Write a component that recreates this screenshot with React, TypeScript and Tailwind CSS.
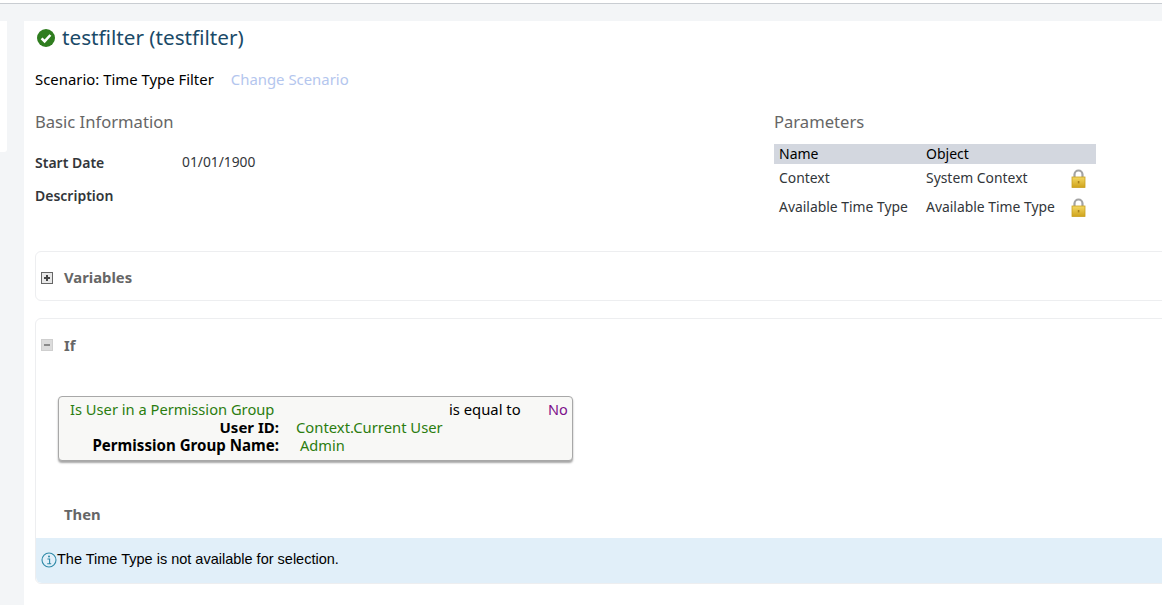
import React from 'react';

const font = 'font-["Noto_Sans",sans-serif]';

const CheckIcon = () => (
  <svg width="20" height="20" viewBox="0 0 20 20" className="shrink-0">
    <circle cx="10" cy="10" r="9" fill="#2f7d1f" />
    <path d="M5.6 10.4 8.6 13.4 14.4 7" fill="none" stroke="#fff" strokeWidth="2.6" />
  </svg>
);

const LockIcon = () => (
  <svg width="15" height="19" viewBox="0 0 15 19">
    <defs>
      <linearGradient id="lockBody" x1="0" y1="0" x2="0" y2="1">
        <stop offset="0" stopColor="#f4d862" />
        <stop offset="1" stopColor="#cfa31c" />
      </linearGradient>
    </defs>
    <path d="M3.5 8V5.5a4 4 0 0 1 8 0V8" fill="none" stroke="#a3a3a3" strokeWidth="2.2" />
    <rect x="1" y="8" width="13" height="10.5" fill="url(#lockBody)" stroke="#c9a020" strokeWidth="0.8" />
    <rect x="6.8" y="12" width="1.6" height="2.4" fill="#a8801a" />
  </svg>
);

const ToggleBox = ({ open }: { open?: boolean }) => (
  <span
    className={`flex h-[12px] w-[12px] items-center justify-center border ${
      open ? 'border-[#cfcfcf] bg-[#dcdcdc]' : 'border-[#666666] bg-[#e8e8e8]'
    }`}
  >
    <span className={`relative block h-[2px] w-[6px] ${open ? 'bg-[#8a8a8a]' : 'bg-[#444444]'}`}>
      {!open && <span className="absolute left-[2px] top-[-2px] block h-[6px] w-[2px] bg-[#444444]" />}
    </span>
  </span>
);

const InfoIcon = () => (
  <svg width="16" height="16" viewBox="0 0 16 16" className="shrink-0">
    <circle cx="8" cy="8" r="7" fill="none" stroke="#2f8aa8" strokeWidth="1.1" />
    <circle cx="8" cy="4.6" r="1" fill="#2f8aa8" />
    <path d="M6.4 7h2.2v4.6M6.2 11.8h4" fill="none" stroke="#2f8aa8" strokeWidth="1.1" />
  </svg>
);

const params = ['Context', 'Available Time Type'];
const paramObjects = ['System Context', 'Available Time Type'];

export default function App() {
  return (
    <div className={`h-[605px] w-[1162px] overflow-hidden bg-[#f3f5f7] ${font}`}>
      <div className="h-[4px] border-b border-[#c9cdd2] bg-white" />
      <div className="flex items-start gap-[17px] pt-[17px]">
        <div className="h-[131px] w-[7px] rounded-br-[3px] bg-white" />

        {/* Main panel */}
        <div className="h-[584px] min-w-0 flex-1 overflow-hidden bg-white pl-[11px]">
          <div className="flex h-[33px] items-center gap-[6px] pl-[1px]">
            <CheckIcon />
            <h1 className="text-[20.7px] leading-none text-[#1a4a68]">testfilter (testfilter)</h1>
          </div>

          <div className="mt-[13px] flex h-[24px] items-center text-[14.9px]">
            <span className="text-black">Scenario: Time Type Filter</span>
            <span className="ml-[17px] text-[#b4c6ee]">Change Scenario</span>
          </div>

          <div className="mt-[19px] flex">
            <div className="w-[739px]">
              <h2 className="text-[16.6px] leading-[24px] text-[#666666]">Basic Information</h2>
              <div className="mt-[18px] flex h-[20px] items-center text-[14px]">
                <span className="w-[147px] font-semibold text-[#32363a]">Start Date</span>
                <span className="text-[13.8px] text-[#32363a]">01/01/1900</span>
              </div>
              <div className="mt-[14px] h-[20px] text-[14px] font-semibold leading-[20px] text-[#32363a]">Description</div>
            </div>

            <div className="w-[322px]">
              <h2 className="text-[16.6px] leading-[24px] text-[#666666]">Parameters</h2>
              <div className="mt-[10px] flex h-[20px] items-center bg-[#d3d7df] pb-[2px] pl-[5px] text-[14px] text-black">
                <span className="w-[147px]">Name</span>
                <span>Object</span>
              </div>
              {params.map((name, i) => (
                <div key={name} className="flex h-[29px] items-center pl-[5px] text-[13.9px] text-[#32363a]">
                  <span className="w-[147px] whitespace-nowrap">{name}</span>
                  <span className="w-[145px] whitespace-nowrap">{paramObjects[i]}</span>
                  <LockIcon />
                </div>
              ))}
            </div>
          </div>

          {/* Variables */}
          <div className="mt-[29px] flex h-[50px] w-[1200px] items-center gap-[11px] rounded-[6px] border border-[#edeef0] pl-[5px] pt-[3px]">
            <ToggleBox />
            <span className="text-[14.8px] font-bold text-[#666666]">Variables</span>
          </div>

          {/* If */}
          <div className="mt-[17px] h-[266px] w-[1200px] rounded-[6px] border border-[#edeef0]">
            <div className="flex h-[50px] items-center gap-[11px] pl-[5px] pt-[2px]">
              <ToggleBox open />
              <span className="text-[14.8px] font-bold text-[#666666]">If</span>
            </div>

            <div className="ml-[22px] mt-[27px] h-[65px] w-[515px] rounded-[4px] border border-[#a8a8a8] bg-[#f8f8f6] pl-[11px] pt-[3px] text-[15px] leading-[18px] shadow-[0_2px_2px_rgba(0,0,0,0.35)]">
              <div className="flex">
                <span className="w-[379px] whitespace-nowrap text-[14.7px] text-[#2b7d0f]">Is User in a Permission Group</span>
                <span className="w-[99px] text-[14.8px] text-black">is equal to</span>
                <span className="text-[14.5px] text-[#7d0f8a]">No</span>
              </div>
              <div className="flex">
                <span className="w-[209px] text-right text-[15px] font-bold text-black">User ID:</span>
                <span className="ml-[17px] text-[14.8px] text-[#2b7d0f]">Context.Current User</span>
              </div>
              <div className="flex">
                <span className="w-[209px] whitespace-nowrap text-right text-[15.1px] font-bold text-black">Permission Group Name:</span>
                <span className="ml-[21px] text-[14.6px] text-[#2b7d0f]">Admin</span>
              </div>
            </div>

            <div className="ml-[28px] mt-[43px] h-[20px] text-[14.8px] font-bold leading-[20px] text-[#666666]">Then</div>

            <div className='mt-[14px] flex h-[45px] items-center rounded-b-[6px] bg-[#e1eff9] pb-[2px] pl-[5px] font-["Liberation_Sans",sans-serif] text-[14.5px] text-black'>
              <InfoIcon />
              <span>The Time Type is not available for selection.</span>
            </div>
          </div>
        </div>
      </div>
    </div>
  );
}
